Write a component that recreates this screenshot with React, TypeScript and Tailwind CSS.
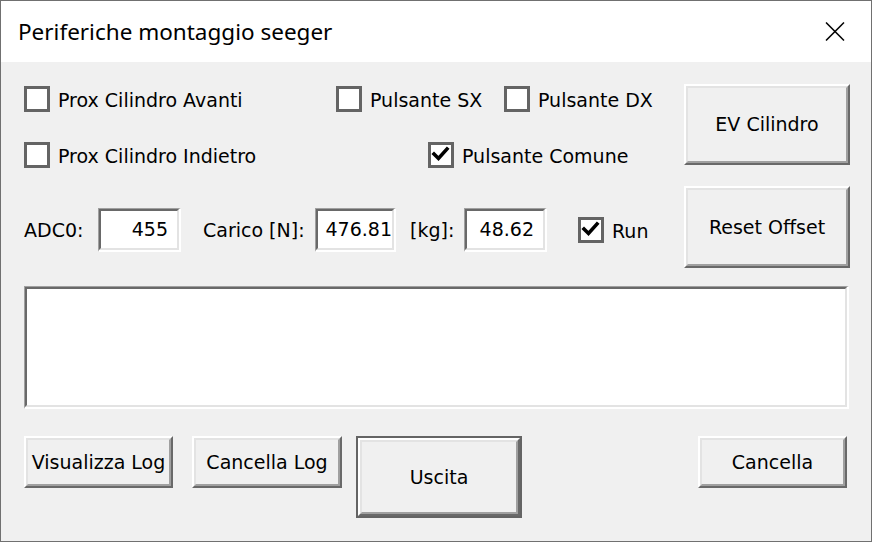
import React from "react";

function Check({ label, checked = false }: { label: string; checked?: boolean }) {
  return (
    <div className="flex items-center">
      <div className="w-[26px] h-[26px] border-[3px] border-[#646464] bg-white flex items-center justify-center shrink-0">
        {checked && (
          <svg width="20" height="20" viewBox="0 0 20 20">
            <polyline points="3,9 7.5,13.5 16,4" fill="none" stroke="#000" strokeWidth="3.6" strokeLinecap="square" strokeLinejoin="miter" />
          </svg>
        )}
      </div>
      <span className="ml-[8px] pt-[2px] whitespace-nowrap">{label}</span>
    </div>
  );
}

function Btn({ label, w, h, def = false }: { label: string; w: string; h: string; def?: boolean }) {
  const inner = (
    <div className="flex-1 border-2 border-t-white border-l-white border-r-[#696969] border-b-[#696969] flex">
      <div className="flex-1 border-2 border-t-[#e3e3e3] border-l-[#e3e3e3] border-r-[#a0a0a0] border-b-[#a0a0a0] bg-[#f0f0f0] flex items-center justify-center whitespace-nowrap">
        {label}
      </div>
    </div>
  );
  return (
    <div className={`${w} ${h} flex shrink-0 ${def ? "border-2 border-[#646464]" : ""}`}>{inner}</div>
  );
}

function Field({ value, w, pr }: { value: string; w: string; pr: string }) {
  return (
    <div className={`${w} h-[44px] flex shrink-0 border-t border-l border-t-[#a0a0a0] border-l-[#a0a0a0] border-r-2 border-b-2 border-r-white border-b-white`}>
      <div className={`flex-1 flex items-center justify-end overflow-hidden bg-white border-2 border-t-[#696969] border-l-[#696969] border-r-[#e3e3e3] border-b-[#e3e3e3] ${pr}`}>
        <span className="whitespace-nowrap">{value}</span>
      </div>
    </div>
  );
}

export default function App() {
  return (
    <div className="w-[872px] h-[542px] border border-[#707070] bg-[#f0f0f0] flex flex-col overflow-hidden text-black">
      <div className="h-[61px] shrink-0 bg-white flex items-center justify-between pl-[17px] pr-[26px]">
        <span className="font-['Noto_Sans',sans-serif] text-[22.5px] leading-none pt-[2px] text-black">
          Periferiche montaggio seeger
        </span>
        <svg width="20" height="19" viewBox="0 0 20 19">
          <line x1="1" y1="0.5" x2="19" y2="18.5" stroke="#000" strokeWidth="1.5" />
          <line x1="19" y1="0.5" x2="1" y2="18.5" stroke="#000" strokeWidth="1.5" />
        </svg>
      </div>
      <div className="flex-1 flex flex-col pl-[23px] pt-[22px] font-['DejaVu_Sans',sans-serif] text-[19px] leading-none">
        <div className="flex">
          <div className="w-[660px] flex flex-col">
            <div className="mt-[2px] h-[26px] flex items-center">
              <div className="w-[312px]">
                <Check label="Prox Cilindro Avanti" />
              </div>
              <div className="w-[168px]">
                <Check label="Pulsante SX" />
              </div>
              <Check label="Pulsante DX" />
            </div>
            <div className="mt-[30px] h-[26px] flex items-center">
              <div className="w-[404px]">
                <Check label="Prox Cilindro Indietro" />
              </div>
              <Check label="Pulsante Comune" checked />
            </div>
            <div className="mt-[40px] h-[44px] flex items-center">
              <span className="w-[74px] shrink-0">ADC0:</span>
              <Field value="455" w="w-[83px]" pr="pr-[9px]" />
              <span className="ml-[22px] w-[112px] shrink-0 whitespace-nowrap">Carico [N]:</span>
              <Field value="476.81" w="w-[81px]" pr="pr-0" />
              <span className="ml-[14px] w-[54px] shrink-0">[kg]:</span>
              <Field value="48.62" w="w-[83px]" pr="pr-[9px]" />
              <div className="ml-[31px]">
                <Check label="Run" checked />
              </div>
            </div>
          </div>
          <div className="flex flex-col gap-[21px]">
            <Btn label="EV Cilindro" w="w-[166px]" h="h-[81px]" />
            <Btn label="Reset Offset" w="w-[166px]" h="h-[82px]" />
          </div>
        </div>
        <div className="mt-[18px] w-[825px] h-[123px] flex border-t border-l border-t-[#a0a0a0] border-l-[#a0a0a0] border-r-2 border-b-2 border-r-white border-b-white">
          <div className="flex-1 bg-white border-2 border-t-[#696969] border-l-[#696969] border-r-[#e3e3e3] border-b-[#e3e3e3]" />
        </div>
        <div className="mt-[27px] flex items-start">
          <Btn label="Visualizza Log" w="w-[149px]" h="h-[52px]" />
          <div className="ml-[19px]">
            <Btn label="Cancella Log" w="w-[150px]" h="h-[52px]" />
          </div>
          <div className="ml-[14px]">
            <Btn label="Uscita" w="w-[166px]" h="h-[82px]" def />
          </div>
          <div className="ml-[176px]">
            <Btn label="Cancella" w="w-[149px]" h="h-[52px]" />
          </div>
        </div>
      </div>
    </div>
  );
}
